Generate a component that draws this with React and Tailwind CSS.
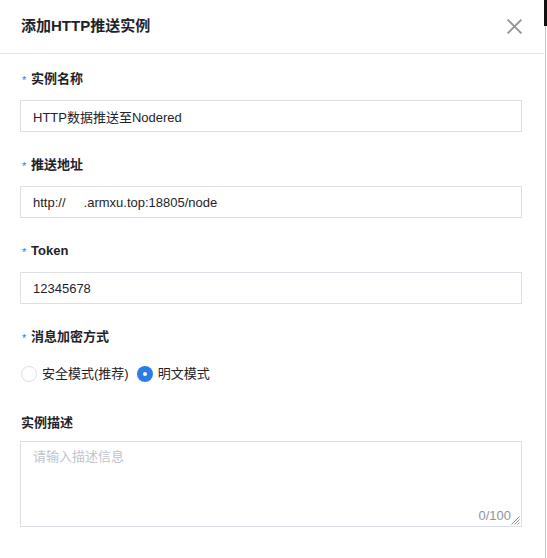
import React, { useState } from 'react';

const Label = ({ required, children, className = '' }) => (
  <div className={`flex items-center h-5 text-[13px] font-bold text-[#1f2329] ${className}`}>
    {required && <span className="w-[11px] pl-[2px] pt-[2px] text-[#2b7ce9] font-normal text-[11px]">*</span>}
    <span>{children}</span>
  </div>
);

const TextInput = ({ value, onChange }) => (
  <input
    type="text"
    value={value}
    onChange={onChange}
    className="w-full h-[32px] px-3 border border-[#dcdfe6] text-[13px] text-[#1f2329] outline-none focus:border-[#2b7ce9]"
  />
);

const Radio = ({ checked, label, onClick }) => (
  <label className="flex items-center cursor-pointer" onClick={onClick}>
    <span
      className={`flex items-center justify-center w-[16px] h-[16px] rounded-full ${
        checked ? 'bg-[#2b7ce9]' : 'border border-[#dcdfe6] bg-white'
      }`}
    >
      {checked && <span className="w-[4px] h-[4px] rounded-full bg-white" />}
    </span>
    <span className="ml-[5px] text-[13px] text-[#1f2329]">{label}</span>
  </label>
);

const App = () => {
  const [form, setForm] = useState({
    name: 'HTTP数据推送至Nodered',
    url: 'http://     .armxu.top:18805/node',
    token: '12345678',
    mode: 'plain',
    desc: '',
  });

  const set = (key) => (e) => setForm({ ...form, [key]: e.target.value });

  return (
    <div
      className="flex w-[547px] h-[558px] bg-white overflow-hidden"
      style={{ fontFamily: '"Liberation Sans", "Noto Sans CJK SC", sans-serif' }}
    >
      <div className="flex flex-col flex-1 min-w-0">
        <div className="flex items-center justify-between h-[54px] pl-[21px] pr-[21px] border-b border-[#e4e6ea]">
          <h2 className="text-[15px] font-bold text-[#1f2329]">添加HTTP推送实例</h2>
          <button className="text-[#909399]">
            <svg width="17" height="17" viewBox="0 0 16 16" fill="none" stroke="currentColor" strokeWidth="1.8">
              <path d="M1.5 1.5 L14.5 14.5 M14.5 1.5 L1.5 14.5" />
            </svg>
          </button>
        </div>

        <form className="flex flex-col pt-[15px] pl-[20px] pr-[22px]">
          <Label required>实例名称</Label>
          <div className="mt-[11px] mb-[23px]">
            <TextInput value={form.name} onChange={set('name')} />
          </div>

          <Label required>推送地址</Label>
          <div className="mt-[11px] mb-[23px]">
            <TextInput value={form.url} onChange={set('url')} />
          </div>

          <Label required>Token</Label>
          <div className="mt-[11px] mb-[23px]">
            <TextInput value={form.token} onChange={set('token')} />
          </div>

          <Label required>消息加密方式</Label>
          <div className="flex items-center gap-[8px] h-5 mt-[17px] mb-[29px] pl-[1px]">
            <Radio checked={form.mode === 'safe'} label="安全模式(推荐)" onClick={() => setForm({ ...form, mode: 'safe' })} />
            <Radio checked={form.mode === 'plain'} label="明文模式" onClick={() => setForm({ ...form, mode: 'plain' })} />
          </div>

          <Label className="pl-[1px]">实例描述</Label>
          <div className="relative mt-[8px]">
            <textarea
              value={form.desc}
              onChange={set('desc')}
              maxLength={100}
              placeholder="请输入描述信息"
              className="block w-full h-[86px] px-3 py-[5px] border border-[#dcdfe6] text-[13px] text-[#1f2329] placeholder:text-[#c0c4cc] outline-none resize-none"
            />
            <span className="absolute right-[11px] bottom-[2px] text-[13px] text-[#909399]">
              {form.desc.length}/100
            </span>
            <svg className="absolute right-[2px] bottom-[2px]" width="9" height="9" viewBox="0 0 9 9" stroke="#8a8d92" strokeWidth="1">
              <path d="M8.5 0.5 L0.5 8.5 M8.5 3.5 L3.5 8.5 M8.5 6.5 L6.5 8.5" />
            </svg>
          </div>
        </form>
      </div>

      <div className="flex flex-col w-[3px]">
        <div className="h-[26px] bg-[#111]" />
        <div className="flex-1 flex">
          <div className="w-[1px] bg-white" />
          <div className="w-[1px] bg-[#c4c4c4]" />
        </div>
      </div>
    </div>
  );
};

export default App;
